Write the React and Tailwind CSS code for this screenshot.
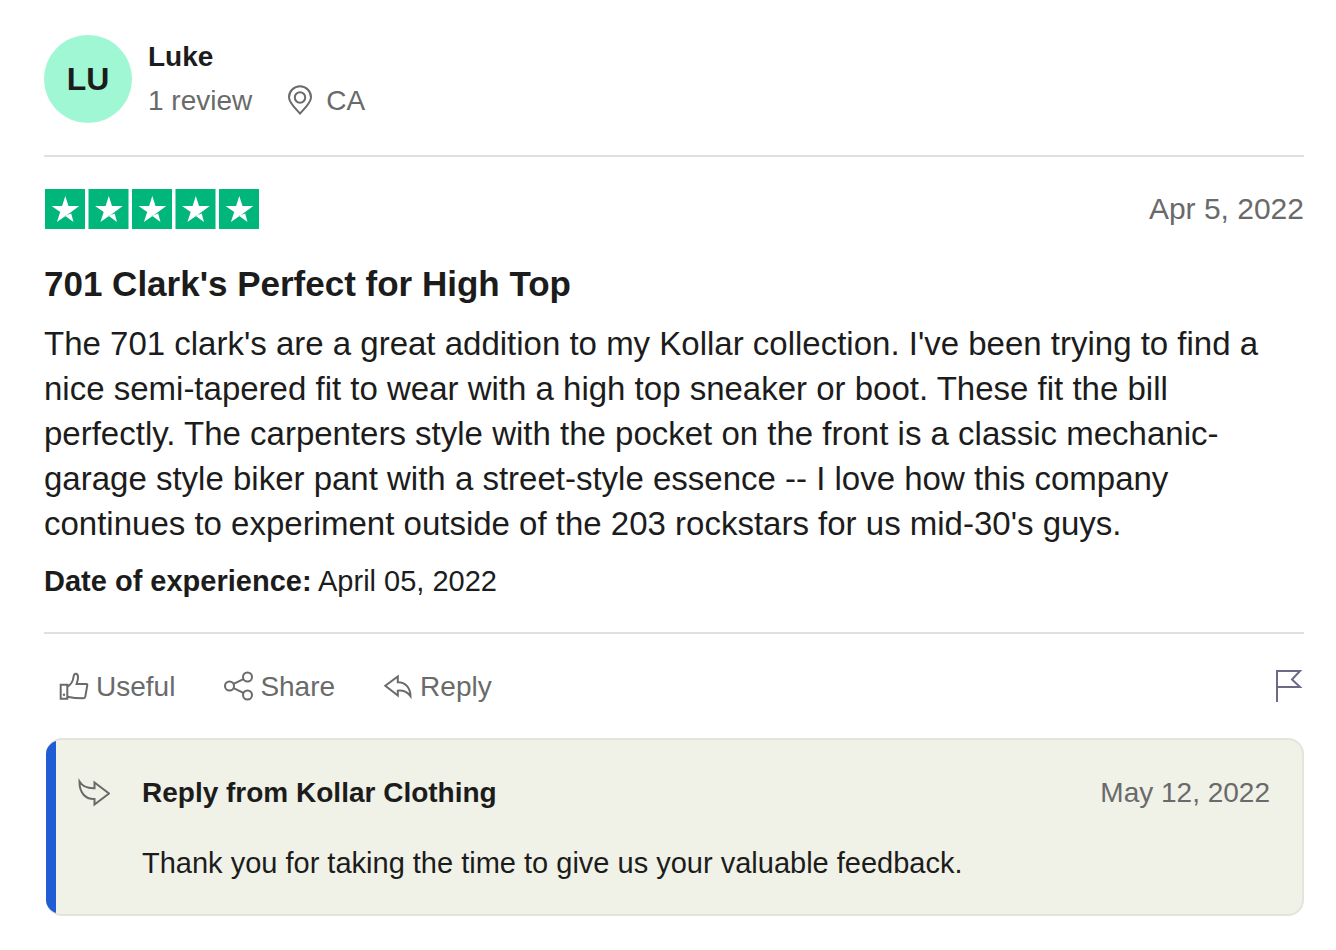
const iconProps = {
  viewBox: '0 0 32 32',
  fill: 'none',
  stroke: 'currentColor',
  strokeWidth: 2,
  'aria-hidden': true,
};

function PinIcon() {
  return (
    <svg {...iconProps} className="size-8 shrink-0">
      <path d="M16 28.500C11.5 23.500 5 18 5 12.300a11 11 0 0 1 22 0C27 18 20.500 23.500 16 28.500z" />
      <circle cx="16" cy="12.500" r="5.200" />
    </svg>
  );
}

function ThumbIcon() {
  return (
    <svg {...iconProps} className="size-8 shrink-0">
      <path d="M2.700 13.700h6.600v14H2.700z" />
      <path d="M9.300 15.700C12.500 14 15 10.500 15.500 6c.3-2.300 1.300-3.500 2.600-3.200 2.700.6 2.300 4.900.5 10.200h9.800c.8 0 1 .6.900 1.200l-2 11.500c-.2 1.100-.8 1.600-1.700 1.600-5 0-9.800-.1-16.300-1.600" />
      <circle cx="6" cy="23.800" r="1.200" fill="currentColor" stroke="none" />
    </svg>
  );
}

function ShareIcon() {
  return (
    <svg {...iconProps} className="size-8 shrink-0">
      <circle cx="7.500" cy="15" r="4.500" />
      <circle cx="25.500" cy="6" r="4.500" />
      <circle cx="25.500" cy="24" r="4.500" />
      <path d="M11.600 12.900l9.800-4.800M11.600 17.100l9.800 4.800" />
    </svg>
  );
}

function ReplyIcon() {
  return (
    <svg {...iconProps} className="size-8 shrink-0">
      <path d="M15.800 5.500v5.700c7.400-.2 12.600 5.500 12.700 14-3-4-6.800-6.100-12.700-5.500v4.800L3.300 14.700z" />
    </svg>
  );
}

function ForwardIcon() {
  return (
    <svg {...iconProps} className="size-8 shrink-0">
      <path d="M1.500 4.500c2.700 4.600 7 7 15 6.700V5.500L31 16.500 16.500 27.500v-5.500C7 22.300 1.300 15.500 1.500 4.500z" />
    </svg>
  );
}

function FlagIcon() {
  return (
    <svg viewBox="0 0 28 34" fill="none" stroke="currentColor" strokeWidth="2" className="h-[34px] w-7" aria-hidden="true">
      <path d="M1 32V1h23l-8 8.500 8 7.500H1" />
    </svg>
  );
}

const STAR_OFFSETS = [1, 44.500, 88, 131.500, 175];

function Stars() {
  return (
    <svg role="img" aria-label="Rated 5 out of 5 stars" viewBox="0 0 215 40" className="h-10 w-[215px]">
      {STAR_OFFSETS.map((x) => (
        <g key={x} transform={`translate(${x} 0)`}>
          <rect width="40" height="40" fill="#00b67a" />
          <path
            fill="#fff"
            d="M20.300 7l3.200 10h10.700L25.500 23.400l-13.600 9.500 3.300-9.900L6.600 17h10.500zM26.200 24.600l-6.200 2.200 8.500 6.100z"
          />
        </g>
      ))}
    </svg>
  );
}

function ActionButton({ icon, label }) {
  return (
    <button type="button" className="flex items-center gap-1.5 text-[28px] leading-9">
      {icon}
      {label}
    </button>
  );
}

export default function App() {
  return (
    <article className="bg-white pt-[35px] pr-8 pb-8 pl-11 font-['Liberation_Sans',Arial,sans-serif] text-[#1c1c1c]">
      <header className="flex items-center gap-4 border-b-2 border-[#e0e0e0] pb-8">
        <div className="flex size-[88px] items-center justify-center rounded-full bg-[#9ff7d4] text-[32px] font-bold">
          LU
        </div>
        <div>
          <p className="text-[28px] leading-[44px] font-bold">Luke</p>
          <div className="flex items-center gap-8 text-[28px] leading-[44px] text-[#696a6a]">
            <span>1 review</span>
            <span className="flex items-center gap-2.5">
              <PinIcon />
              CA
            </span>
          </div>
        </div>
      </header>

      <section className="border-b-2 border-[#e0e0e0] pt-8 pb-[33px]">
        <div className="flex items-center justify-between">
          <Stars />
          <time dateTime="2022-04-05" className="text-[30px] leading-9 text-[#696a6a]">
            Apr 5, 2022
          </time>
        </div>
        <h2 className="mt-8 text-[35px] leading-[45px] font-bold">701 Clark's Perfect for High Top</h2>
        <p className="mt-[15px] text-[33px] leading-[45px]">
          The 701 clark's are a great addition to my Kollar collection. I've been trying to find a nice semi-tapered fit
          to wear with a high top sneaker or boot. These fit the bill perfectly. The carpenters style with the pocket on
          the front is a classic mechanic-garage style biker pant with a street-style essence -- I love how this company
          continues to experiment outside of the 203 rockstars for us mid-30's guys.
        </p>
        <p className="mt-[17px] text-[29px] leading-9">
          <b>Date of experience:</b> April 05, 2022
        </p>
      </section>

      <div className="flex items-center justify-between pt-[35px] pb-[33px] text-[#696a6a]">
        <div className="flex gap-[47px] pl-[14px]">
          <ActionButton icon={<ThumbIcon />} label="Useful" />
          <ActionButton icon={<ShareIcon />} label="Share" />
          <ActionButton icon={<ReplyIcon />} label="Reply" />
        </div>
        <button type="button" aria-label="Report review" className="text-[#6c6a85]">
          <FlagIcon />
        </button>
      </div>

      <section className="ml-0.5 flex overflow-hidden rounded-2xl border-2 border-l-0 border-[#e3e4da] bg-[#f0f1e7]">
        <div className="w-[10px] shrink-0 bg-[#205cd4]" />
        <div className="flex grow gap-8 pt-[33px] pr-8 pb-[31px] pl-[22px]">
          <div className="pt-1 text-[#696a6a]">
            <ForwardIcon />
          </div>
          <div className="grow">
            <div className="flex items-center justify-between text-[28px] leading-10">
              <h3 className="font-bold">Reply from Kollar Clothing</h3>
              <time dateTime="2022-05-12" className="text-[#696a6a]">
                May 12, 2022
              </time>
            </div>
            <p className="mt-[30px] text-[29px] leading-10">
              Thank you for taking the time to give us your valuable feedback.
            </p>
          </div>
        </div>
      </section>
    </article>
  );
}
